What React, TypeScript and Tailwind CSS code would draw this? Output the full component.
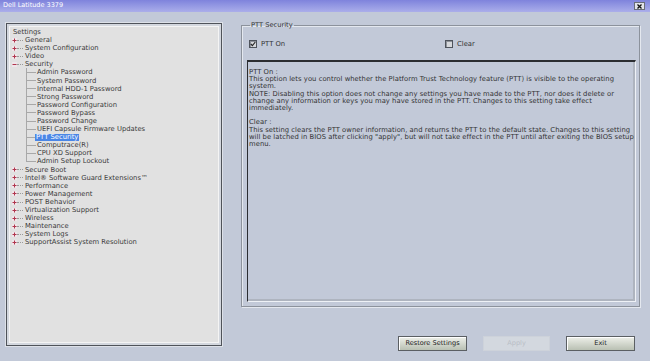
import React from "react";

const font = { fontFamily: '"DejaVu Sans", Verdana, sans-serif' };

type Node = { label: string; children?: string[]; open?: boolean };

const tree: Node[] = [
  { label: "General" },
  { label: "System Configuration" },
  { label: "Video" },
  {
    label: "Security",
    open: true,
    children: [
      "Admin Password",
      "System Password",
      "Internal HDD-1 Password",
      "Strong Password",
      "Password Configuration",
      "Password Bypass",
      "Password Change",
      "UEFI Capsule Firmware Updates",
      "PTT Security",
      "Computrace(R)",
      "CPU XD Support",
      "Admin Setup Lockout",
    ],
  },
  { label: "Secure Boot" },
  { label: "Intel® Software Guard Extensions™" },
  { label: "Performance" },
  { label: "Power Management" },
  { label: "POST Behavior" },
  { label: "Virtualization Support" },
  { label: "Wireless" },
  { label: "Maintenance" },
  { label: "System Logs" },
  { label: "SupportAssist System Resolution" },
];

function Expander({ open }: { open?: boolean }) {
  return (
    <svg width="5" height="5" viewBox="0 0 5 5" className="ml-[2px] shrink-0">
      <rect x="0" y="0" width="5" height="5" fill="#efe6ea" />
      <line x1="0.5" y1="2.5" x2="4.5" y2="2.5" stroke="#b0354d" strokeWidth="1" />
      {!open && <line x1="2.5" y1="0.5" x2="2.5" y2="4.5" stroke="#b0354d" strokeWidth="1" />}
    </svg>
  );
}

function TopRow({ node }: { node: Node }) {
  return (
    <div className="flex h-[8.1px] items-center">
      <Expander open={node.open} />
      <span className="w-[6px] shrink-0 border-t border-dotted border-[#9a9a9a]" />
      <span className="ml-[2px] whitespace-nowrap">{node.label}</span>
    </div>
  );
}

function ChildRow({ label, last }: { label: string; last: boolean }) {
  const selected = label === "PTT Security";
  return (
    <div className="flex h-[8.1px] items-stretch">
      <span className="w-[16px] shrink-0" />
      <span className="flex w-[1px] shrink-0 flex-col">
        <span className="h-1/2 bg-[#a8a8a8]" />
        <span className={last ? "h-1/2" : "h-1/2 bg-[#a8a8a8]"} />
      </span>
      <span className="flex w-[9px] shrink-0 items-center">
        <span className="w-full border-t border-[#a8a8a8]" />
      </span>
      <span className="flex items-center">
        <span
          className={
            selected
              ? "whitespace-nowrap bg-[#4a86e6] px-[1px] -ml-[1px] text-white leading-[7px]"
              : "ml-[1px] whitespace-nowrap"
          }
        >
          {label}
        </span>
      </span>
    </div>
  );
}

function Checkbox({ checked }: { checked?: boolean }) {
  return (
    <span className="flex h-[8px] w-[8px] shrink-0 items-center justify-center border border-[#4e535c] bg-[#d6d8dc] shadow-[inset_1px_1px_0_#8d9199]">
      {checked && (
        <svg width="6" height="6" viewBox="0 0 6 6">
          <path d="M0.8 3 L2.4 4.6 L5.3 1" fill="none" stroke="#222" strokeWidth="1.1" />
        </svg>
      )}
    </span>
  );
}

function Button({ label, disabled }: { label: string; disabled?: boolean }) {
  return (
    <button
      className={
        disabled
          ? "h-[15px] w-[67px] border border-[#cdd2da] bg-[#d3d8df] text-[6.6px] text-[#b9bec6]"
          : "h-[15px] w-[69px] border border-[#5b5f63] bg-gradient-to-b from-[#eef0ea] to-[#b9c0b3] text-[6.6px] text-[#222] shadow-[inset_1px_1px_0_#ffffff]"
      }
      style={font}
    >
      {label}
    </button>
  );
}

const desc = [
  "PTT On :",
  "This option lets you control whether the Platform Trust Technology feature (PTT) is visible to the operating",
  "system.",
  "NOTE: Disabling this option does not change any settings you have made to the PTT, nor does it delete or",
  "change any information or keys you may have stored in the PTT. Changes to this setting take effect",
  "immediately.",
  "",
  "Clear :",
  "This setting clears the PTT owner information, and returns the PTT to the default state. Changes to this setting",
  "will be latched in BIOS after clicking \"apply\", but will not take effect in the PTT until after exiting the BIOS setup",
  "menu.",
];

export default function App() {
  return (
    <div className="flex h-[361px] w-[650px] flex-col overflow-hidden bg-[#c2c9d8]" style={font}>
      {/* title bar */}
      <div className="flex h-[12px] items-center justify-between bg-gradient-to-b from-[#7f83dc] to-[#abaeea] pl-[3px] pr-[5px]">
        <span className="text-[6.5px] text-white">Dell Latitude 3379</span>
        <span className="flex h-[8px] w-[11px] items-center justify-center border border-[#6a6d78] bg-[#e2e3ea]">
          <svg width="5" height="5" viewBox="0 0 5 5">
            <path d="M0.5 0.5 L4.5 4.5 M4.5 0.5 L0.5 4.5" stroke="#111" strokeWidth="1.3" />
          </svg>
        </span>
      </div>

      <div className="flex items-start pl-[6px] pt-[9px]">
        {/* settings tree */}
        <div className="mt-[2px] h-[323px] w-[216px] border border-[#4f535a] bg-[#d3d7de] p-[2px] shadow-[0_0_0_1px_#dde1e8]">
          <div className="h-full border border-[#f4f4f4] bg-[#e1e1e1] pt-[1px] text-[6.8px] text-[#3a3a3a]">
            <div className="flex h-[8.1px] items-center pl-[3px]">Settings</div>
            {tree.map((n) => (
              <div key={n.label}>
                <TopRow node={n} />
                {n.children?.map((c, i) => (
                  <ChildRow key={c} label={c} last={i === n.children!.length - 1} />
                ))}
              </div>
            ))}
          </div>
        </div>

        {/* right side */}
        <div className="ml-[19px] flex w-[399px] flex-col">
          <fieldset className="h-[286px] w-[399px] min-w-0 border border-[#8c929c] px-[5px] pb-[4px] pr-[3px] shadow-[inset_1px_1px_0_#e4e8ef,1px_1px_0_#e4e8ef]">
            <legend className="ml-[3px] px-[1px] text-[6.7px] leading-[8px] text-[#333]">PTT Security</legend>
            <div className="mt-[11px] flex h-[8px] items-center text-[6.8px] text-[#333]">
              <span className="ml-[2px]">
                <Checkbox checked />
              </span>
              <span className="ml-[4px] w-[184px]">PTT On</span>
              <Checkbox />
              <span className="ml-[4px]">Clear</span>
            </div>
            <div className="mt-[12px] h-[242px] overflow-hidden border-l-[1.5px] border-t-[2px] border-b border-r border-l-[#2b2d31] border-t-[#2b2d31] border-b-[#eef1f6] border-r-[#eef1f6] pl-[1px] pt-[7px] text-[6.8px] leading-[7.2px] tracking-[0.04px] text-[#333] shadow-[inset_-2px_-2px_0_#aeb4bf]">
              {desc.map((l, i) => (
                <div key={i} className="h-[7.2px] whitespace-nowrap">
                  {l}
                </div>
              ))}
            </div>
          </fieldset>

          <div className="mt-[29px] flex justify-end gap-[16px] pr-[5px]">
            <Button label="Restore Settings" />
            <Button label="Apply" disabled />
            <Button label="Exit" />
          </div>
        </div>
      </div>
    </div>
  );
}
